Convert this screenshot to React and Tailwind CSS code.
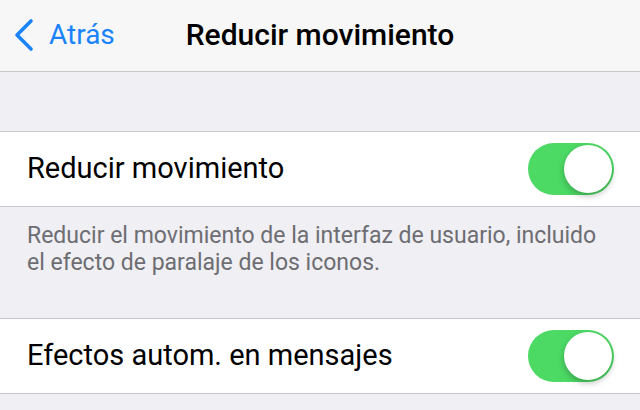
import React from 'react'

function Toggle({ on = true }) {
  return (
    <div className={`relative w-[86px] h-[52px] rounded-full ${on ? 'bg-[#4cd964]' : 'bg-[#e5e5ea]'}`}>
      <div className="absolute right-[2px] top-[2px] w-[48px] h-[48px] rounded-full bg-white shadow-[0_3px_6px_rgba(0,0,0,0.25)]" />
    </div>
  )
}

function Row({ label }) {
  return (
    <div className="flex items-center justify-between h-[76px] pl-[27px] pr-[26px] bg-white border-y border-[#c8c7cc]">
      <span className="text-[29px] text-black">{label}</span>
      <Toggle />
    </div>
  )
}

export default function App() {
  return (
    <div className="w-[640px] h-[410px] overflow-hidden bg-[#efeff4] font-['Roboto',sans-serif]">
      <div className="relative flex items-center justify-center h-[72px] bg-[#f7f7f7] border-b border-[#c8c7cc]">
        <div className="absolute left-[13px] top-0 h-full flex items-center gap-[14px] text-[#1a82fb]">
          <svg width="22" height="34" viewBox="0 0 22 34" fill="none" className="mt-[-2px]">
            <path d="M18 3 L4 17 L18 31" stroke="currentColor" strokeWidth="3.6" strokeLinecap="round" strokeLinejoin="round" />
          </svg>
          <span className="text-[28px] mt-[-2px]">Atrás</span>
        </div>
        <span className="text-[30px] font-medium text-black mt-[-2px]">Reducir movimiento</span>
      </div>
      <div className="h-[59px]" />
      <Row label="Reducir movimiento" />
      <p className="pl-[27px] pr-[30px] pt-[15px] text-[23px] leading-[27px] text-[#6d6d72]">
        Reducir el movimiento de la interfaz de usuario, incluido el efecto de paralaje de los iconos.
      </p>
      <div className="h-[42px]" />
      <Row label="Efectos autom. en mensajes" />
    </div>
  )
}
